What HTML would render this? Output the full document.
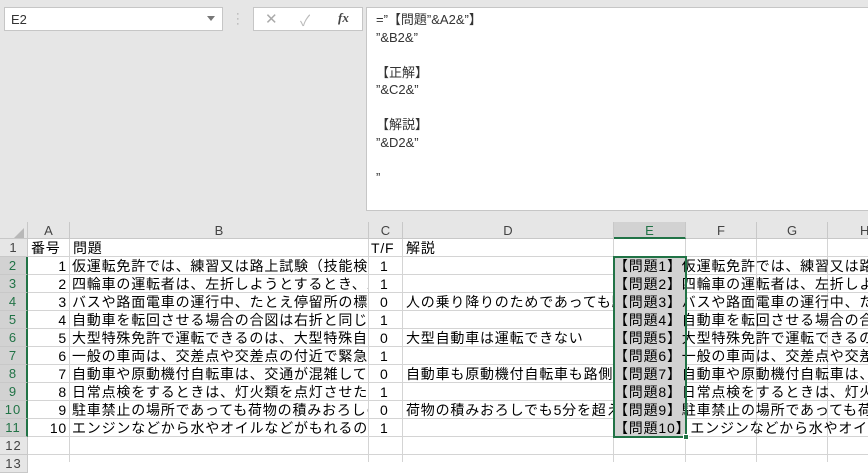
<!DOCTYPE html>
<html><head><meta charset="utf-8"><style>
*{margin:0;padding:0;box-sizing:border-box}
body{width:868px;height:462px;overflow:hidden;background:#fff;font-family:"Liberation Sans","Noto Sans CJK JP",sans-serif;font-size:13px;color:#000;position:relative}
.a{position:absolute;white-space:nowrap;overflow:hidden}
.top{position:absolute;left:0;top:0;width:868px;height:222px;background:#e6e6e6}
.fb{position:absolute;left:366px;top:7px;width:502px;height:204px;background:#fff;border:1px solid #c6c6c6;border-right:none;padding:3px 0 0 9px;font-size:13px;line-height:17.5px;color:#333;white-space:pre}
.hdr{position:absolute;top:222px;height:17px;background:#e6e6e6;border-right:1px solid #c8c8c8;border-bottom:1px solid #c8c8c8;text-align:center;color:#444;font-size:13px;line-height:18px}
.rh{position:absolute;left:0;width:28px;height:18px;background:#e6e6e6;border-bottom:1px solid #c8c8c8;border-right:1px solid #c8c8c8;text-align:center;color:#444;line-height:18px;font-size:13px;letter-spacing:1px}
.vl{position:absolute;top:239px;width:1px;height:223px;background:#d4d4d4}
.hl{position:absolute;left:28px;width:840px;height:1px;background:#d4d4d4}
.c{position:absolute;height:18px;line-height:18px;white-space:nowrap;overflow:hidden;font-size:14px;letter-spacing:0.8px}
</style></head><body>
<div class="top"></div>
<div class="a" style="left:4px;top:7px;width:219px;height:24px;background:#fff;border:1px solid #c6c6c6;padding:4px 0 0 6px;color:#333">E2</div>
<div class="a" style="left:207px;top:16px;width:0;height:0;border-left:4px solid transparent;border-right:4px solid transparent;border-top:5px solid #777"></div>
<div class="a" style="left:236px;top:12px;color:#999;font-size:11px;line-height:5px">·<br>·<br>·</div>
<div class="a" style="left:253px;top:7px;width:110px;height:24px;background:#fff;border:1px solid #c6c6c6"></div>
<div class="a" style="left:265px;top:10px;color:#aaa;font-size:15px">✕</div>
<div class="a" style="left:300px;top:10px;color:#bbb;font-size:15px">✓</div>
<div class="a" style="left:338px;top:10px;color:#444;font-size:13px;font-style:italic;font-family:'Liberation Serif',serif;font-weight:bold">fx</div>
<div class="fb">=”【問題”&amp;A2&amp;”】
”&amp;B2&amp;”

【正解】
”&amp;C2&amp;”

【解説】
”&amp;D2&amp;”

”</div>
<div class="hdr" style="left:0;width:28px"></div>
<div class="a" style="left:14px;top:228px;width:0;height:0;border-left:10px solid transparent;border-bottom:10px solid #b8b8b8"></div>
<div class="hdr" style="left:28px;width:42px">A</div>
<div class="hdr" style="left:70px;width:299px">B</div>
<div class="hdr" style="left:369px;width:34px">C</div>
<div class="hdr" style="left:403px;width:211px">D</div>
<div class="hdr" style="left:614px;width:72px;background:#d2d2d2;border-bottom:2px solid #217346;color:#217346">E</div>
<div class="hdr" style="left:686px;width:71px">F</div>
<div class="hdr" style="left:757px;width:71px">G</div>
<div class="hdr" style="left:828px;width:60px;text-align:left;padding-left:32px">H</div>
<div class="vl" style="left:69px"></div><div class="vl" style="left:368px"></div><div class="vl" style="left:402px"></div><div class="vl" style="left:613px"></div><div class="vl" style="left:685px"></div><div class="vl" style="left:756px"></div><div class="vl" style="left:827px"></div>
<div class="hl" style="top:256px"></div><div class="hl" style="top:274px"></div><div class="hl" style="top:292px"></div><div class="hl" style="top:310px"></div><div class="hl" style="top:328px"></div><div class="hl" style="top:346px"></div><div class="hl" style="top:364px"></div><div class="hl" style="top:382px"></div><div class="hl" style="top:400px"></div><div class="hl" style="top:418px"></div><div class="hl" style="top:436px"></div><div class="hl" style="top:454px"></div>
<div class="rh" style="top:239px">1</div>
<div class="rh" style="top:257px;background:#d2d2d2;color:#217346;border-right:2px solid #217346">2</div>
<div class="rh" style="top:275px;background:#d2d2d2;color:#217346;border-right:2px solid #217346">3</div>
<div class="rh" style="top:293px;background:#d2d2d2;color:#217346;border-right:2px solid #217346">4</div>
<div class="rh" style="top:311px;background:#d2d2d2;color:#217346;border-right:2px solid #217346">5</div>
<div class="rh" style="top:329px;background:#d2d2d2;color:#217346;border-right:2px solid #217346">6</div>
<div class="rh" style="top:347px;background:#d2d2d2;color:#217346;border-right:2px solid #217346">7</div>
<div class="rh" style="top:365px;background:#d2d2d2;color:#217346;border-right:2px solid #217346">8</div>
<div class="rh" style="top:383px;background:#d2d2d2;color:#217346;border-right:2px solid #217346">9</div>
<div class="rh" style="top:401px;background:#d2d2d2;color:#217346;border-right:2px solid #217346">10</div>
<div class="rh" style="top:419px;background:#d2d2d2;color:#217346;border-right:2px solid #217346">11</div>
<div class="rh" style="top:437px">12</div>
<div class="rh" style="top:455px">13</div>
<div class="a" style="left:614px;top:257px;width:72px;height:180px;background:#d2d2d2"></div>
<div class="c" style="left:31px;top:239px">番号</div>
<div class="c" style="left:73px;top:239px">問題</div>
<div class="c" style="left:371px;top:239px">T/F</div>
<div class="c" style="left:406px;top:239px">解説</div>
<div class="c" style="left:28px;top:257px;width:39px;text-align:right">1</div>
<div class="c" style="left:28px;top:275px;width:39px;text-align:right">2</div>
<div class="c" style="left:28px;top:293px;width:39px;text-align:right">3</div>
<div class="c" style="left:28px;top:311px;width:39px;text-align:right">4</div>
<div class="c" style="left:28px;top:329px;width:39px;text-align:right">5</div>
<div class="c" style="left:28px;top:347px;width:39px;text-align:right">6</div>
<div class="c" style="left:28px;top:365px;width:39px;text-align:right">7</div>
<div class="c" style="left:28px;top:383px;width:39px;text-align:right">8</div>
<div class="c" style="left:28px;top:401px;width:39px;text-align:right">9</div>
<div class="c" style="left:28px;top:419px;width:39px;text-align:right">10</div>
<div class="c" style="left:72px;top:257px;width:296px">仮運転免許では、練習又は路上試験（技能検定）</div>
<div class="c" style="left:72px;top:275px;width:296px">四輪車の運転者は、左折しようとするとき、バック</div>
<div class="c" style="left:72px;top:293px;width:296px">バスや路面電車の運行中、たとえ停留所の標示</div>
<div class="c" style="left:72px;top:311px;width:296px">自動車を転回させる場合の合図は右折と同じ要領</div>
<div class="c" style="left:72px;top:329px;width:296px">大型特殊免許で運転できるのは、大型特殊自動車</div>
<div class="c" style="left:72px;top:347px;width:296px">一般の車両は、交差点や交差点の付近で緊急自</div>
<div class="c" style="left:72px;top:365px;width:296px">自動車や原動機付自転車は、交通が混雑している</div>
<div class="c" style="left:72px;top:383px;width:296px">日常点検をするときは、灯火類を点灯させたり、</div>
<div class="c" style="left:72px;top:401px;width:296px">駐車禁止の場所であっても荷物の積みおろしのため</div>
<div class="c" style="left:72px;top:419px;width:296px">エンジンなどから水やオイルなどがもれるのは、</div>
<div class="c" style="left:380px;top:257px">1</div><div class="c" style="left:380px;top:275px">1</div><div class="c" style="left:380px;top:293px">0</div><div class="c" style="left:380px;top:311px">1</div><div class="c" style="left:380px;top:329px">0</div><div class="c" style="left:380px;top:347px">1</div><div class="c" style="left:380px;top:365px">0</div><div class="c" style="left:380px;top:383px">1</div><div class="c" style="left:380px;top:401px">0</div><div class="c" style="left:380px;top:419px">1</div>
<div class="c" style="left:406px;top:293px;width:207px">人の乗り降りのためであっても駐車</div>
<div class="c" style="left:406px;top:329px;width:207px">大型自動車は運転できない</div>
<div class="c" style="left:406px;top:365px;width:207px">自動車も原動機付自転車も路側帯</div>
<div class="c" style="left:406px;top:401px;width:207px">荷物の積みおろしでも5分を超える</div>
<div class="c" style="left:614px;top:257px;width:254px">【問題1】仮運転免許では、練習又は路上試験</div>
<div class="c" style="left:614px;top:275px;width:254px">【問題2】四輪車の運転者は、左折しようとする</div>
<div class="c" style="left:614px;top:293px;width:254px">【問題3】バスや路面電車の運行中、たとえ</div>
<div class="c" style="left:614px;top:311px;width:254px">【問題4】自動車を転回させる場合の合図は</div>
<div class="c" style="left:614px;top:329px;width:254px">【問題5】大型特殊免許で運転できるのは、</div>
<div class="c" style="left:614px;top:347px;width:254px">【問題6】一般の車両は、交差点や交差点の</div>
<div class="c" style="left:614px;top:365px;width:254px">【問題7】自動車や原動機付自転車は、交通</div>
<div class="c" style="left:614px;top:383px;width:254px">【問題8】日常点検をするときは、灯火類を</div>
<div class="c" style="left:614px;top:401px;width:254px">【問題9】駐車禁止の場所であっても荷物の</div>
<div class="c" style="left:614px;top:419px;width:254px">【問題10】エンジンなどから水やオイルなど</div>
<div class="a" style="left:613px;top:256px;width:74px;height:182px;border:2px solid #217346"></div>
<div class="a" style="left:683px;top:434px;width:6px;height:6px;background:#217346;border:1px solid #fff"></div>
</body></html>
